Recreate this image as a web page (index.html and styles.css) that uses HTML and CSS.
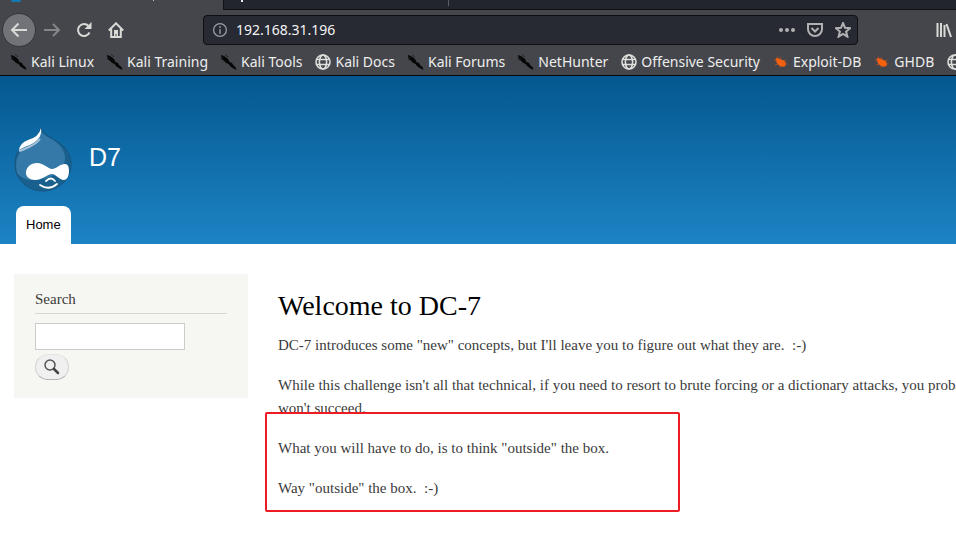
FILE: index.html
```html
<!DOCTYPE html>
<html lang="en">
<head>
<meta charset="utf-8">
<title>Welcome to DC-7 | D7</title>
<link rel="stylesheet" href="styles.css">
</head>
<body>
<svg class="defs" aria-hidden="true">
  <symbol id="kali" viewBox="0 0 16 16"><path d="M0 1l3 1 2 1.500 2 1.500 1.500 3 2.500 1 1.500 2.500 2 1.500 1 3-3-1.500-3-2-2-2.500-3-1.500-2-2.500-2-1.500z" fill="#050505"/><path d="M0 5l3 1.500M4 .5l3 2.500M1 3l2 1" stroke="#1b1c20" stroke-width=".8"/></symbol>
  <symbol id="globe" viewBox="0 0 16 16"><g fill="none" stroke="#dededb" stroke-width="1.6"><circle cx="8" cy="8" r="7"/><ellipse cx="8" cy="8" rx="3.600" ry="7"/><path d="M1.500 5.500h13M1.500 10.500h13"/></g></symbol>
  <symbol id="bug" viewBox="0 0 16 16"><path d="M2.500 4.500Q5 3 8 5.500Q12 6 13 9.500L12.500 12Q9 13.500 6 11.500Q3 9 2.500 4.500z" fill="#f36010"/><path d="M5 5L4 2.500M8 6L7.500 3M11 7L13.500 6M4 7L1 6M5 10L2 11M8 12L6.500 13.500M12 10L14.500 10" stroke="#b95322" stroke-width=".8"/></symbol>
</svg>
<div class="browser">
  <div class="tabs">
    <div class="tab current"><i class="favicon"></i><i class="stem blue"></i></div>
    <div class="tab first"><i class="stem"></i></div>
    <div class="tab"></div>
  </div>
  <div class="nav">
    <button class="tool back" aria-label="Back"><svg width="18" height="18" viewBox="0 0 18 18"><path d="M17 9H2M8.500 2.500L2 9l6.500 6.500"/></svg></button>
    <button class="tool forward" aria-label="Forward"><svg width="18" height="18" viewBox="0 0 18 18"><path d="M1 9h15M10 3l6 6-6 6"/></svg></button>
    <button class="tool" aria-label="Reload"><svg width="16" height="16" viewBox="0 0 16 16"><path d="M13.500 10.500A6 6 0 1 1 12.500 4"/><path class="solid" d="M15.500 0v7H8.500z"/></svg></button>
    <button class="tool" aria-label="Home"><svg width="16" height="16" viewBox="0 0 16 16"><path d="M.8 8.500L8 1.300l7.200 7.200M3.200 7v8h9.600V7"/><path class="solid" d="M6 8h4v7H8.500v-3H7.500v3H6z"/></svg></button>
    <label class="address">
      <svg width="16" height="16" viewBox="0 0 16 16"><circle cx="8" cy="8" r="6.400"/><path d="M8 7v5M8 4v2"/></svg>
      <input type="text" value="192.168.31.196" aria-label="Address">
      <svg class="bright" width="16" height="16" viewBox="0 0 16 16"><g class="solid"><circle cx="2" cy="8" r="2"/><circle cx="8" cy="8" r="2"/><circle cx="14" cy="8" r="2"/></g></svg>
      <svg class="bright" width="16" height="16" viewBox="0 0 16 16"><path d="M1 2h14v5a7 7 0 0 1-14 0zM4.500 6L8 9.500 11.500 6"/></svg>
      <svg class="bright" width="16" height="16" viewBox="0 0 16 16"><path d="M8 1l2 4.800 5 .4-3.900 3.300 1.300 5.200L8 12l-4.400 2.700 1.300-5.200L1 6.200l5-.4z"/></svg>
    </label>
    <button class="tool library" aria-label="Library"><svg width="16" height="16" viewBox="0 0 16 16"><path d="M1.500 1v14M5 1v14M8.500 3v12M10.500 2l4.500 13"/></svg></button>
  </div>
  <nav class="bookmarks">
    <a href="#"><svg><use href="#kali"/></svg>Kali Linux</a>
    <a href="#"><svg><use href="#kali"/></svg>Kali Training</a>
    <a href="#"><svg><use href="#kali"/></svg>Kali Tools</a>
    <a href="#"><svg><use href="#globe"/></svg>Kali Docs</a>
    <a href="#"><svg><use href="#kali"/></svg>Kali Forums</a>
    <a href="#"><svg><use href="#kali"/></svg>NetHunter</a>
    <a href="#"><svg><use href="#globe"/></svg>Offensive Security</a>
    <a href="#"><svg><use href="#bug"/></svg>Exploit-DB</a>
    <a href="#"><svg><use href="#bug"/></svg>GHDB</a>
    <a href="#" aria-label="More"><svg><use href="#globe"/></svg></a>
  </nav>
</div>
<header>
  <a class="brand" href="#">
    <svg width="58" height="66" viewBox="0 0 58 66">
      <path d="M27 1Q28 6 34 9C46 16 57 22 57 37C57 53 44 64 29 64S1 53 1 37C1 27 6 20 14 15Q25 10 27 1z" fill="#19608f" stroke="#17547f"/>
      <path d="M27 3Q28 7 34 10C45 16 51 22 51 31C51 43 40 52 21 53Q9 54 3 46Q0 34 6 25Q9 18 18 14Q26 10 27 3z" fill="#3479a7"/>
      <path d="M26 12Q22 17 15 20Q9 23 5 24" fill="none" stroke="#a7c4d8" stroke-width="2"/>
      <path d="M27 1Q28 8 24 12Q20 17 13 19Q8 21 5 23Q6 16 14 13Q25 10 27 1z" fill="#fff"/>
      <path d="M12 46c0-6 5-10 11-10 7 0 11 6 15 6s8-5 13-5c3 0 4 3 4 7 0 5-2 9-5 9-5 0-8-6-12-6-5 0-9 6-17 6-5 0-9-3-9-7z" fill="#fff"/>
      <path d="M32 54q5-5 9 0M26 58q9 6 17-1" fill="none" stroke="#fff" stroke-width="1.800" stroke-linecap="round"/>
    </svg>
    <span>D7</span>
  </a>
  <a class="home" href="#">Home</a>
</header>
<main>
  <aside>
    <form>
      <h2><label for="q">Search</label></h2>
      <input id="q" type="text">
      <button type="button" aria-label="Search"><svg width="16" height="16" viewBox="0 0 16 16"><circle cx="6" cy="6" r="5" fill="none" stroke="#555" stroke-width="1.500"/><path d="M10 10l4 4" stroke="#444" stroke-width="2.500" stroke-linecap="round"/></svg></button>
    </form>
  </aside>
  <article>
    <h1>Welcome to DC-7</h1>
    <p>DC-7 introduces some "new" concepts, but I'll leave you to figure out what they are.&nbsp; :-)</p>
    <p>While this challenge isn't all that technical, if you need to resort to brute forcing or a dictionary attacks, you probably won't succeed.</p>
    <div class="marked">
      <p>What you will have to do, is to think "outside" the box.</p>
      <p>Way "outside" the box.&nbsp; :-)</p>
    </div>
  </article>
</main>
</body>
</html>
```
FILE: styles.css
```css
*, *::after { box-sizing: border-box; }
body { margin: 0; background: #fff; color: #3b3b3b; font: 15px/23px "Liberation Serif", serif; overflow: hidden; }
a { color: inherit; text-decoration: none; }
button { padding: 0; border: 0; background: none; }
svg { display: block; flex: none; }
.defs { position: absolute; width: 0; height: 0; }

.browser { background: #44464c; border-bottom: 1px solid #08090b; color: #eeeeec; font: 14px/20px "Noto Sans", sans-serif; }
.tabs { display: flex; height: 10px; }
.tab { flex: 1; display: flex; align-items: flex-start; padding-left: 17px; background: #23252e; border-bottom: 1px solid #101116; }
.current { flex: none; width: 224px; padding-left: 11px; background: none; border-bottom: 0; border-right: 1px solid #101116; }
.first { flex: none; width: 225px; }
.first::after { content: ""; width: 1px; height: 6px; margin-left: auto; background: #5b5d64; }
.favicon { width: 10px; height: 2px; border-radius: 0 0 5px 5px; background: #147ab5; }
.stem { width: 2px; height: 2px; background: #eee; }
.blue { width: 1px; height: 1px; margin-left: 132px; background: #a8c8e8; }
.nav { display: flex; align-items: center; height: 40px; padding-left: 2px; overflow: hidden; }
.nav svg { fill: none; stroke: #d9d9d6; stroke-width: 2; }
.nav .solid { fill: #d9d9d6; stroke: none; }
.tool { display: grid; place-items: center; width: 32px; height: 32px; }
.back { width: 34px; height: 34px; border: 1px solid #33353a; border-radius: 50%; background: #727378; }
.nav .forward svg { stroke: #85868a; }
.address { flex: 1; display: flex; align-items: center; gap: 12px; height: 30px; margin: 0 72px 0 71px; padding: 0 6px 0 8px; border: 1px solid #0e0f13; border-radius: 4px; background: #272933; }
.nav .address svg { stroke: #9c9da1; stroke-width: 1.3; }
.nav .address .bright { stroke: #b1b1b3; stroke-width: 2; }
.address .bright .solid { fill: #b1b1b3; }
.address input { flex: 1; min-width: 0; margin-left: -4px; padding: 0; border: 0; outline: 0; background: none; color: #f5f5f5; font: inherit; }
.library { width: 20px; justify-items: start; margin-left: 6px; }
.bookmarks { display: flex; gap: 13px; height: 25px; padding: 2px 0 0 11px; overflow: hidden; }
.bookmarks a { display: flex; gap: 4px; white-space: nowrap; }
.bookmarks svg { width: 16px; height: 16px; margin-top: 2px; }

header { display: flex; flex-direction: column; align-items: flex-start; justify-content: space-between; height: 168px; padding: 51px 16px 0 14px; background: linear-gradient(#04588f, #1d83c4); }
.brand { display: flex; gap: 17px; color: #fff; font: 25px/60px "Liberation Sans", sans-serif; }
.home { margin-left: 2px; padding: 0 10px; border-radius: 8px 8px 0 0; background: #fff; color: #000; font: 13px/38px "Liberation Sans", sans-serif; }

main { display: flex; align-items: flex-start; gap: 30px; padding: 30px 0 0 14px; }
aside { flex: none; width: 234px; padding: 15px 21px 18px; background: #f6f6f2; }
h1, h2, p { margin: 0; font-weight: 400; }
h2 { margin-bottom: 9px; padding-bottom: 4px; border-bottom: 1px solid #d6d6d6; font-size: 15px; line-height: 20px; }
aside input { display: block; width: 150px; height: 27px; margin: 0 0 4px; border: 1px solid #ccc; background: #fff; }
aside button { display: grid; place-items: center; width: 34px; height: 26px; border: 1px solid #ccc; border-color: #e4e4e4 #d2d2d2 #b4b4b4; border-radius: 13px; background: #f0f0f0; }
article { flex: 1 0 715px; padding-top: 14px; }
h1 { margin-bottom: 10px; color: #000; font-size: 28px; line-height: 36px; }
p { margin-bottom: 17px; }
.marked { position: relative; }
.marked::after { content: ""; position: absolute; left: -13px; top: -25px; width: 415px; height: 100px; border: 2px solid #ed1c24; border-radius: 2px; }
```
